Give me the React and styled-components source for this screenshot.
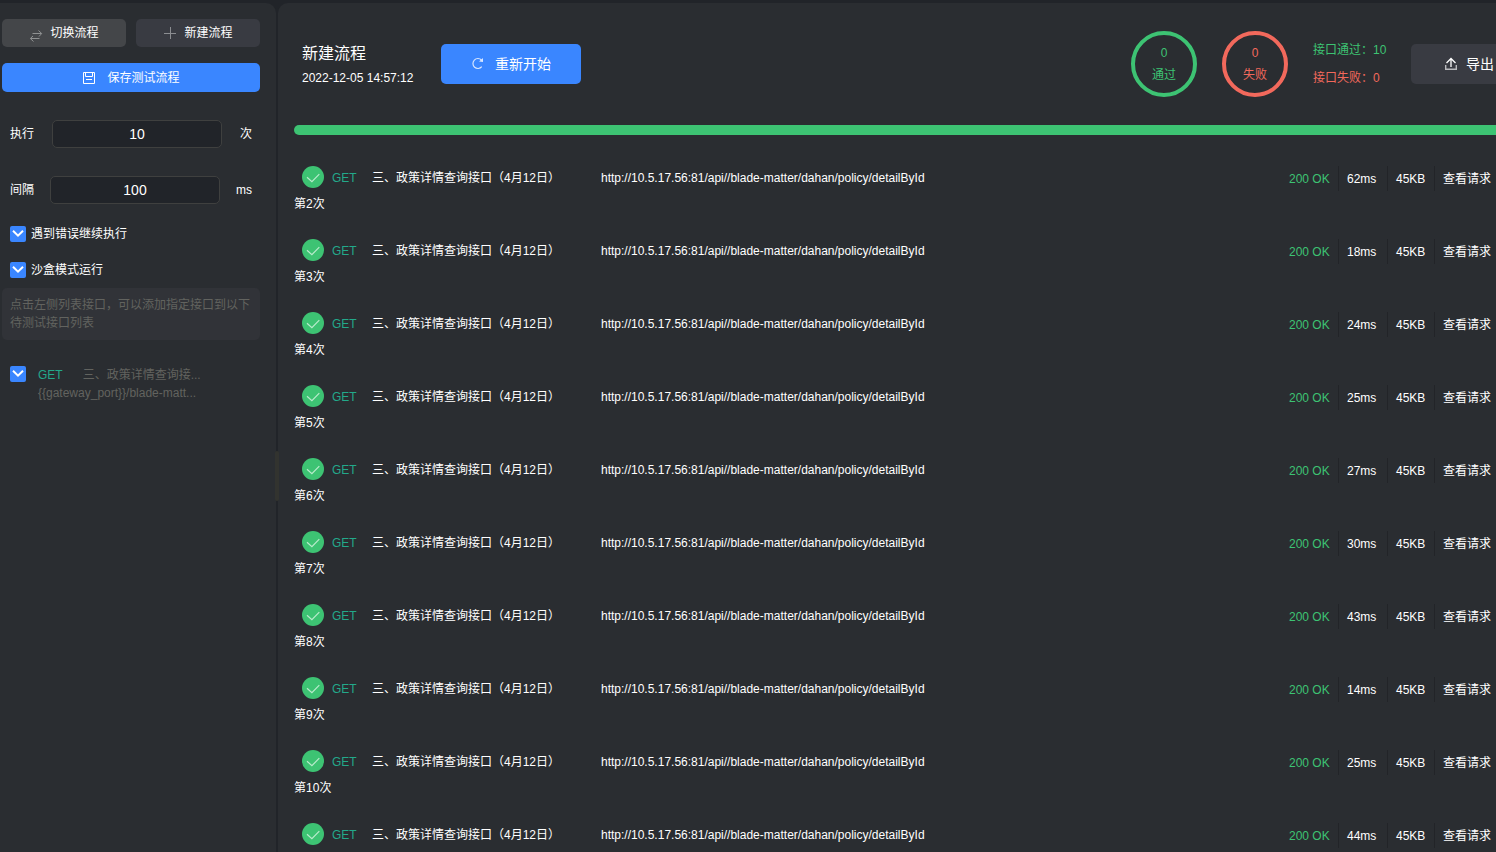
import React from "react";
import styled, { createGlobalStyle } from "styled-components";

const c = {
  page: "#212429",
  panel: "#2a2d31",
  blue: "#3a86ff",
  green: "#3dc373",
  red: "#f2695c",
  teal: "#23a98a",
  muted: "#62635f",
};

const Global = createGlobalStyle`
  * { box-sizing: border-box; }
  html, body, #root { height: 100%; }
  body {
    margin: 0;
    overflow: hidden;
    background: ${c.page};
    color: #fff;
    font: 12px/16px "Liberation Sans", "Noto Sans CJK SC", sans-serif;
  }
  button, input { font: inherit; color: inherit; }
`;

const Page = styled.div`
  display: flex;
  gap: 2px;
  height: 100%;
  padding-top: 3px;
`;

const Sidebar = styled.aside`
  position: relative;
  flex: 0 0 276px;
  padding: 16px 16px 0 2px;
  background: ${c.panel};
  border-radius: 0 10px 0 0;
`;

const Handle = styled.div`
  position: absolute;
  top: 448px;
  right: -3px;
  width: 4px;
  height: 50px;
  border-radius: 2px;
  background: #32332f;
`;

const Button = styled.button`
  display: flex;
  align-items: center;
  justify-content: ${(p) => (p.$start ? "flex-start" : "center")};
  gap: ${(p) => p.$gap || 8}px;
  flex: ${(p) => p.$flex || "none"};
  width: ${(p) => p.$width || "auto"};
  height: ${(p) => p.$height || 28}px;
  padding: 0 ${(p) => p.$pad || 0}px;
  border: 0;
  border-radius: 5px;
  background: ${(p) => p.$bg};
  font-size: ${(p) => p.$size || 12}px;
  cursor: pointer;
`;

const ButtonRow = styled.div`
  display: flex;
  gap: 10px;
  margin-bottom: 16px;
`;

const Field = styled.label`
  display: flex;
  align-items: center;
  justify-content: space-between;
  margin-top: 28px;
  padding: 0 8px;
`;

const NumberInput = styled.input`
  width: 170px;
  height: 28px;
  border: 1px solid #3f403f;
  border-radius: 5px;
  background: ${c.page};
  font-size: 14px;
  text-align: center;
  outline: none;
`;

const CheckLabel = styled.label`
  display: flex;
  align-items: center;
  gap: 5px;
  margin-top: ${(p) => p.$top}px;
  padding-left: 8px;
`;

const CheckWrap = styled.span`
  display: grid;
  flex: none;
  width: 16px;
  height: 16px;

  > * { grid-area: 1 / 1; }
  > svg { pointer-events: none; }
`;

const CheckInput = styled.input`
  appearance: none;
  width: 16px;
  height: 16px;
  margin: 0;
  border-radius: 2px;
  background: ${c.blue};
`;

const Hint = styled.p`
  margin: 10px 0 26px;
  padding: 8px;
  border-radius: 5px;
  background: #313338;
  color: ${c.muted};
  line-height: 18px;
`;

const Picked = styled.label`
  display: flex;
  gap: 12px;
  padding-left: 8px;
  color: ${c.muted};
`;

const PickedText = styled.span`
  line-height: 18px;
  white-space: nowrap;
`;

const PickedLine = styled.span`
  display: flex;
  gap: 20px;
`;

const Method = styled.span`
  color: ${c.teal};
`;

const Main = styled.main`
  flex: 1;
  min-width: 0;
  overflow: hidden;
  padding-left: 16px;
  background: ${c.panel};
  border-radius: 10px 0 0 0;
`;

const Content = styled.div`
  margin-right: -55px;
`;

const Header = styled.header`
  display: flex;
  align-items: center;
  padding: 28px 0 28px 8px;
`;

const TitleBlock = styled.div`
  min-width: 115px;
  margin-right: 24px;
  padding-top: 4px;
  line-height: 24px;
`;

const Title = styled.h1`
  margin: 0;
  font-size: 16px;
  font-weight: 400;
  line-height: 24px;
`;

const Stats = styled.div`
  display: flex;
  align-items: center;
  gap: 25px;
  margin-left: auto;
`;

const Ring = styled.div`
  width: 66px;
  height: 66px;
  padding-top: 7px;
  border: 4px solid ${(p) => p.$color};
  border-radius: 50%;
  color: ${(p) => p.$color};
  line-height: 22px;
  text-align: center;
`;

const Totals = styled.div`
  width: 73px;
  line-height: 28px;
  white-space: nowrap;
`;

const Total = styled.div`
  color: ${(p) => p.$color};
`;

const Progress = styled.div`
  height: 10px;
  border-radius: 5px;
  background: ${c.green};
`;

const List = styled.ol`
  margin: 31px 0 0;
  padding: 0;
  list-style: none;
`;

const Item = styled.li`
  height: 73px;
`;

const Row = styled.div`
  display: flex;
  height: 25px;
  margin-bottom: 5px;
  padding-left: 8px;
  line-height: 24px;
  white-space: nowrap;

  > svg { flex: none; margin-right: 8px; }
  > ${Method} { width: 40px; }
`;

const Name = styled.span`
  width: 229px;
`;

const Metrics = styled.div`
  display: flex;
  margin-left: auto;
  line-height: 26px;
`;

const Metric = styled.span`
  width: ${(p) => p.$width}px;
  padding-left: 8px;
  border-right: 1px solid #222428;
  color: ${(p) => p.$color || "#fff"};
`;

const ViewLink = styled.a`
  width: 116px;
  padding-left: 8px;
  color: #fff;
  text-decoration: none;
`;

const Svg = ({ size = 14, children, ...rest }) => (
  <svg
    width={size}
    height={size}
    viewBox={`0 0 ${size} ${size}`}
    fill="none"
    stroke="#fff"
    aria-hidden="true"
    {...rest}
  >
    {children}
  </svg>
);

const SwapIcon = () => (
  <Svg stroke="#8f9192" overflow="visible">
    <path d="M3.500 7.500H12.500M9.500 4.500L12.700 7.500L10 10.500" />
    <path d="M10.500 12.500H1.500M4 10L1.300 12.500L4.500 15.500" />
  </Svg>
);

const PlusIcon = () => (
  <Svg stroke="#8b8d91">
    <path d="M7.500 1V13M1 7.500H13" />
  </Svg>
);

const SaveIcon = () => (
  <Svg>
    <path d="M1.500 1.500H12.500V12.500H1.500ZM3.500 1.500V5.500H10.500V1.500M4 8.500H10" />
  </Svg>
);

const RestartIcon = () => (
  <Svg stroke="#d8e6ff">
    <path d="M10.800 9.700A5 5 0 1 1 10.500 3" strokeWidth="1.200" />
    <path d="M8 4.500L12 1V5Z" fill="#d8e6ff" stroke="none" />
  </Svg>
);

const ExportIcon = () => (
  <Svg>
    <path d="M7 10V2M2.500 6L7 1.500L11.500 6" strokeWidth="1.300" />
    <path d="M1.700 8V12.200H12.300V8" stroke="#b9babd" strokeWidth="1.400" />
  </Svg>
);

const PassIcon = () => (
  <Svg size={22} stroke="#b9ebcc">
    <circle cx="11" cy="11" r="11" fill={c.green} stroke="none" />
    <path d="M5 11.200L9.900 15.700L17.300 8.200" strokeWidth="1.200" />
  </Svg>
);

const Check = (props) => (
  <CheckWrap>
    <CheckInput type="checkbox" defaultChecked {...props} />
    <Svg size={16} strokeWidth="2">
      <path d="M3 4.800L8 9.600L13 4.800" />
    </Svg>
  </CheckWrap>
);

const runs = [62, 18, 24, 25, 27, 30, 43, 14, 25, 44];
const apiName = "三、政策详情查询接口（4月12日）";

export default function App() {
  return (
    <>
      <Global />
      <Page>
        <Sidebar>
          <ButtonRow>
            <Button $bg="#444649" $flex="1" $gap={7}>
              <SwapIcon />切换流程
            </Button>
            <Button $bg="#393b42" $flex="1" $gap={7}>
              <PlusIcon />新建流程
            </Button>
          </ButtonRow>
          <Button $bg={c.blue} $width="100%" $height={29} $gap={11}>
            <SaveIcon />保存测试流程
          </Button>
          <Field>
            执行
            <NumberInput type="text" inputMode="numeric" defaultValue="10" />
            次
          </Field>
          <Field>
            间隔
            <NumberInput type="text" inputMode="numeric" defaultValue="100" />
            ms
          </Field>
          <CheckLabel $top={22}>
            <Check />遇到错误继续执行
          </CheckLabel>
          <CheckLabel $top={20}>
            <Check />沙盒模式运行
          </CheckLabel>
          <Hint>点击左侧列表接口，可以添加指定接口到以下待测试接口列表</Hint>
          <Picked>
            <Check />
            <PickedText>
              <PickedLine>
                <Method>GET</Method>
                <span>三、政策详情查询接...</span>
              </PickedLine>
              {"{{gateway_port}}/blade-matt..."}
            </PickedText>
          </Picked>
          <Handle />
        </Sidebar>
        <Main>
          <Content>
            <Header>
              <TitleBlock>
                <Title>新建流程</Title>
                <time>2022-12-05 14:57:12</time>
              </TitleBlock>
              <Button $bg={c.blue} $width="140px" $height={40} $size={14} $gap={10}>
                <RestartIcon />重新开始
              </Button>
              <Stats>
                <Ring $color={c.green}>
                  <div>0</div>
                  <div>通过</div>
                </Ring>
                <Ring $color={c.red}>
                  <div>0</div>
                  <div>失败</div>
                </Ring>
                <Totals>
                  <Total $color={c.green}>接口通过：10</Total>
                  <Total $color={c.red}>接口失败：0</Total>
                </Totals>
                <Button $bg="#393b42" $width="140px" $height={40} $size={14} $pad={33} $start>
                  <ExportIcon />导出
                </Button>
              </Stats>
            </Header>
            <Progress />
            <List>
              {runs.map((ms, i) => (
                <Item key={i}>
                  <Row>
                    <PassIcon />
                    <Method>GET</Method>
                    <Name>{apiName}</Name>
                    <span>http://10.5.17.56:81/api//blade-matter/dahan/policy/detailById</span>
                    <Metrics>
                      <Metric $width={58} $color={c.green}>200 OK</Metric>
                      <Metric $width={49}>{ms}ms</Metric>
                      <Metric $width={47}>45KB</Metric>
                      <ViewLink href="#request">查看请求</ViewLink>
                    </Metrics>
                  </Row>
                  {i < runs.length - 1 && <div>第{i + 2}次</div>}
                </Item>
              ))}
            </List>
          </Content>
        </Main>
      </Page>
    </>
  );
}
